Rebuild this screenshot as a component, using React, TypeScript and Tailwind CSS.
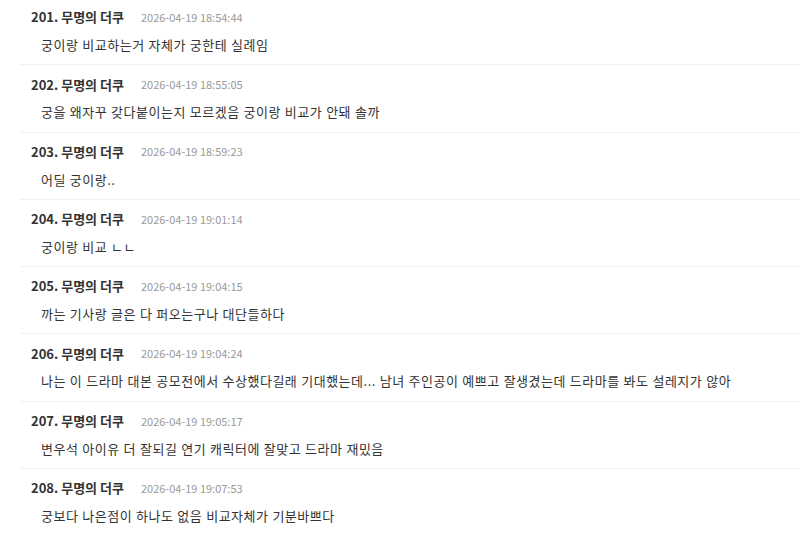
const comments = [
  { no: 201, date: "2026-04-19 18:54:44", text: "궁이랑 비교하는거 자체가 궁한테 실례임" },
  { no: 202, date: "2026-04-19 18:55:05", text: "궁을 왜자꾸 갖다붙이는지 모르겠음 궁이랑 비교가 안돼 솔까" },
  { no: 203, date: "2026-04-19 18:59:23", text: "어딜 궁이랑.." },
  { no: 204, date: "2026-04-19 19:01:14", text: "궁이랑 비교 ㄴㄴ" },
  { no: 205, date: "2026-04-19 19:04:15", text: "까는 기사랑 글은 다 퍼오는구나 대단들하다" },
  {
    no: 206,
    date: "2026-04-19 19:04:24",
    text: "나는 이 드라마 대본 공모전에서 수상했다길래 기대했는데... 남녀 주인공이 예쁘고 잘생겼는데 드라마를 봐도 설레지가 않아",
  },
  { no: 207, date: "2026-04-19 19:05:17", text: "변우석 아이유 더 잘되길 연기 캐릭터에 잘맞고 드라마 재밌음" },
  { no: 208, date: "2026-04-19 19:07:53", text: "궁보다 나은점이 하나도 없음 비교자체가 기분바쁘다" },
];

const App = () => {
  return (
    <div
      className="w-[800px] h-[536px] overflow-hidden bg-white"
      style={{ fontFamily: '"Noto Sans CJK KR", "Noto Sans", sans-serif' }}
    >
      <ul className="-mt-[3px] pl-[20px]">
        {comments.map((c) => (
          <li
            key={c.no}
            className="h-[67.3px] border-t border-[#f0f0f0] pl-[11px] pt-[9px]"
          >
            {/* header: number, nickname, date */}
            <div className="flex items-center h-[20px]">
              <span className="text-[13px] font-bold text-[#333]">
                {c.no}. 무명의 더쿠
              </span>
              <span className="ml-[17px] text-[11px] text-[#999]">{c.date}</span>
            </div>
            <p className="mt-[8px] pl-[10px] h-[20px] leading-[20px] text-[13px] text-[#333] tracking-[0.5px] [word-spacing:0.5px]">
              {c.text}
            </p>
          </li>
        ))}
      </ul>
    </div>
  );
};

export default App;
